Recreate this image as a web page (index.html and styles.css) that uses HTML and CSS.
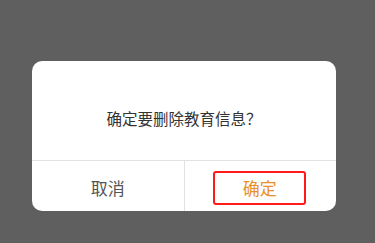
FILE: index.html
```html
<!DOCTYPE html>
<html lang="zh">
<head>
<meta charset="utf-8">
<link rel="stylesheet" href="styles.css">
</head>
<body>
<div class="dialog">
  <div class="message">确定要删除教育信息？</div>
  <div class="actions">
    <div class="btn cancel"><span class="label">取消</span></div>
    <div class="btn confirm"><span class="label boxed">确定</span></div>
  </div>
</div>
</body>
</html>
```
FILE: styles.css
```css
html, body {
  margin: 0;
  padding: 0;
  background: #5f5f5f;
  width: 375px;
  height: 243px;
  overflow: hidden;
  font-family: "Noto Sans CJK SC", "Noto Sans", sans-serif;
}
body {
  padding-top: 61px;
  box-sizing: border-box;
}
.dialog {
  margin-left: 32px;
  width: 304px;
  height: 150px;
  background: #fff;
  border-radius: 10px;
  overflow: hidden;
  display: flex;
  flex-direction: column;
}
.message {
  height: 100px;
  box-sizing: border-box;
  padding-top: 47px;
  text-align: center;
  font-size: 15.5px;
  line-height: 20px;
  color: #333;
  border-bottom: 1px solid #e2e2e2;
}
.actions {
  flex: 1;
  display: flex;
}
.btn {
  flex: 1;
  display: flex;
  justify-content: center;
  align-items: flex-start;
  padding-top: 10px;
  font-size: 17px;
}
.cancel {
  border-right: 1px solid #e2e2e2;
  color: #555;
}
.confirm {
  color: #e8902a;
}
.label {
  height: 34px;
  line-height: 34px;
  display: flex;
  align-items: center;
  justify-content: center;
}
.boxed {
  width: 93px;
  box-sizing: border-box;
  border: 2px solid #ff1a1a;
  border-radius: 3px;
  margin-left: -1px;
}
```
